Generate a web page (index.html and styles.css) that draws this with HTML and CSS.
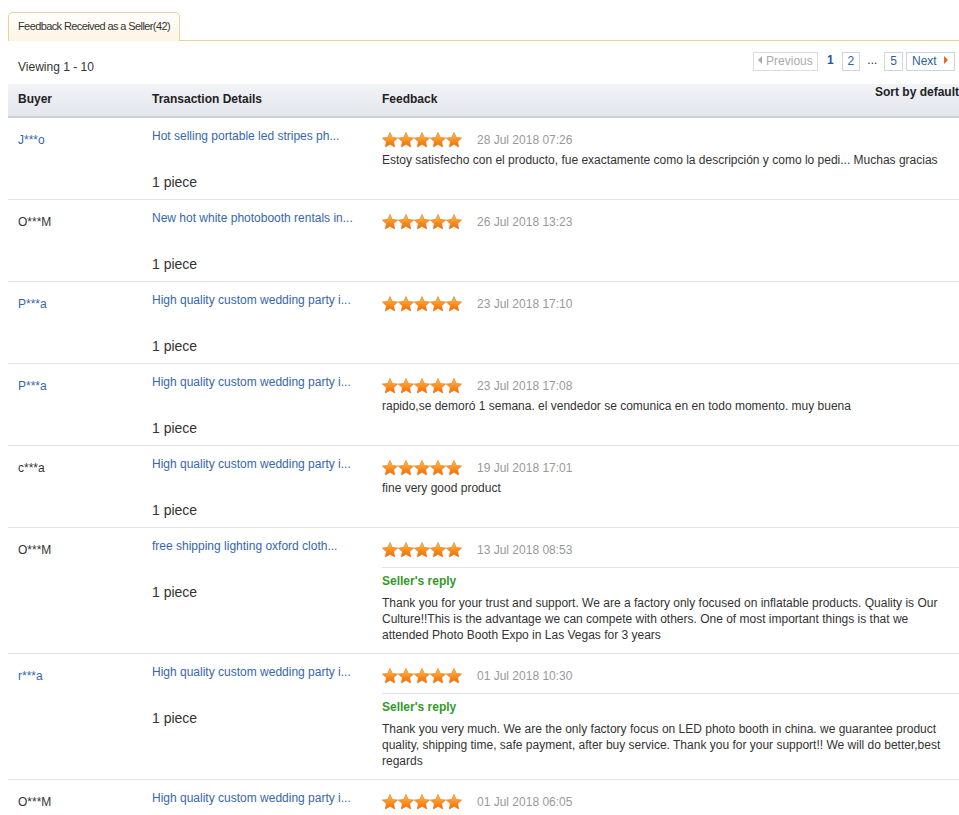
FILE: index.html
```html
<!DOCTYPE html>
<html lang="en">

<head>
    <meta charset="UTF-8">
    <title>Feedback Received as a Seller</title>
    <link rel="stylesheet" href="styles.css">
</head>

<body>
    <!-- shared star shape + fill -->
    <svg class="svg-defs" width="0" height="0">
        <defs>
            <linearGradient id="starFill" x1="0" y1="0" x2="0" y2="1">
                <stop offset="0" stop-color="#ffc650"/>
                <stop offset="0.55" stop-color="#fb8d20"/>
                <stop offset="1" stop-color="#ee6a06"/>
            </linearGradient>
            <symbol id="star" viewBox="0 0 16 16">
                <polygon points="8,0.5 10.2,5.4 15.6,6 11.6,9.7 12.7,15 8,12.3 3.3,15 4.4,9.7 0.4,6 5.8,5.4" fill="url(#starFill)" stroke="#e2700e" stroke-width="0.6" stroke-linejoin="round"/>
            </symbol>
        </defs>
    </svg>

    <div class="tabs">
        <div class="tab">Feedback Received as a Seller(42)</div>
    </div>

    <div class="toolbar">
        <div class="viewing">Viewing 1 - 10</div>
        <div class="pager">
            <a class="prev">Previous</a>
            <span class="current">1</span>
            <a href="#">2</a>
            <span class="dots">...</span>
            <a href="#">5</a>
            <a class="next" href="#">Next</a>
        </div>
    </div>

    <div class="list-head">
        <div class="col">Buyer</div>
        <div class="col">Transaction Details</div>
        <div class="col feedback-head">
            <span>Feedback</span>
            <span class="sort">Sort by default</span>
        </div>
    </div>

    <div class="row">
        <div class="buyer"><a href="#">J***o</a></div>
        <div class="deal">
            <a class="product" href="#">Hot selling portable led stripes ph...</a>
            <div class="qty">1 piece</div>
        </div>
        <div class="feedback">
            <div class="rating">
                <svg class="stars" width="80" height="16"><use href="#star" x="0" width="16" height="16"/><use href="#star" x="16" width="16" height="16"/><use href="#star" x="32" width="16" height="16"/><use href="#star" x="48" width="16" height="16"/><use href="#star" x="64" width="16" height="16"/></svg>
                <span class="date">28 Jul 2018 07:26</span>
            </div>
            <div class="comment">Estoy satisfecho con el producto, fue exactamente como la descripción y como lo pedi... Muchas gracias</div>
        </div>
    </div>

    <div class="row">
        <div class="buyer">O***M</div>
        <div class="deal">
            <a class="product" href="#">New hot white photobooth rentals in...</a>
            <div class="qty">1 piece</div>
        </div>
        <div class="feedback">
            <div class="rating">
                <svg class="stars" width="80" height="16"><use href="#star" x="0" width="16" height="16"/><use href="#star" x="16" width="16" height="16"/><use href="#star" x="32" width="16" height="16"/><use href="#star" x="48" width="16" height="16"/><use href="#star" x="64" width="16" height="16"/></svg>
                <span class="date">26 Jul 2018 13:23</span>
            </div>
        </div>
    </div>

    <div class="row">
        <div class="buyer"><a href="#">P***a</a></div>
        <div class="deal">
            <a class="product" href="#">High quality custom wedding party i...</a>
            <div class="qty">1 piece</div>
        </div>
        <div class="feedback">
            <div class="rating">
                <svg class="stars" width="80" height="16"><use href="#star" x="0" width="16" height="16"/><use href="#star" x="16" width="16" height="16"/><use href="#star" x="32" width="16" height="16"/><use href="#star" x="48" width="16" height="16"/><use href="#star" x="64" width="16" height="16"/></svg>
                <span class="date">23 Jul 2018 17:10</span>
            </div>
        </div>
    </div>

    <div class="row">
        <div class="buyer"><a href="#">P***a</a></div>
        <div class="deal">
            <a class="product" href="#">High quality custom wedding party i...</a>
            <div class="qty">1 piece</div>
        </div>
        <div class="feedback">
            <div class="rating">
                <svg class="stars" width="80" height="16"><use href="#star" x="0" width="16" height="16"/><use href="#star" x="16" width="16" height="16"/><use href="#star" x="32" width="16" height="16"/><use href="#star" x="48" width="16" height="16"/><use href="#star" x="64" width="16" height="16"/></svg>
                <span class="date">23 Jul 2018 17:08</span>
            </div>
            <div class="comment">rapido,se demoró 1 semana. el vendedor se comunica en en todo momento. muy buena</div>
        </div>
    </div>

    <div class="row">
        <div class="buyer">c***a</div>
        <div class="deal">
            <a class="product" href="#">High quality custom wedding party i...</a>
            <div class="qty">1 piece</div>
        </div>
        <div class="feedback">
            <div class="rating">
                <svg class="stars" width="80" height="16"><use href="#star" x="0" width="16" height="16"/><use href="#star" x="16" width="16" height="16"/><use href="#star" x="32" width="16" height="16"/><use href="#star" x="48" width="16" height="16"/><use href="#star" x="64" width="16" height="16"/></svg>
                <span class="date">19 Jul 2018 17:01</span>
            </div>
            <div class="comment">fine very good product</div>
        </div>
    </div>

    <div class="row">
        <div class="buyer">O***M</div>
        <div class="deal">
            <a class="product" href="#">free shipping lighting oxford cloth...</a>
            <div class="qty">1 piece</div>
        </div>
        <div class="feedback">
            <div class="rating">
                <svg class="stars" width="80" height="16"><use href="#star" x="0" width="16" height="16"/><use href="#star" x="16" width="16" height="16"/><use href="#star" x="32" width="16" height="16"/><use href="#star" x="48" width="16" height="16"/><use href="#star" x="64" width="16" height="16"/></svg>
                <span class="date">13 Jul 2018 08:53</span>
            </div>
            <div class="reply">
                <div class="reply-title">Seller's reply</div>
                <div class="reply-text">Thank you for your trust and support. We are a factory only focused on inflatable products. Quality is Our Culture!!This is the advantage we can compete with others. One of most important things is that we<br>attended Photo Booth Expo in Las Vegas for 3 years</div>
            </div>
        </div>
    </div>

    <div class="row">
        <div class="buyer"><a href="#">r***a</a></div>
        <div class="deal">
            <a class="product" href="#">High quality custom wedding party i...</a>
            <div class="qty">1 piece</div>
        </div>
        <div class="feedback">
            <div class="rating">
                <svg class="stars" width="80" height="16"><use href="#star" x="0" width="16" height="16"/><use href="#star" x="16" width="16" height="16"/><use href="#star" x="32" width="16" height="16"/><use href="#star" x="48" width="16" height="16"/><use href="#star" x="64" width="16" height="16"/></svg>
                <span class="date">01 Jul 2018 10:30</span>
            </div>
            <div class="reply">
                <div class="reply-title">Seller's reply</div>
                <div class="reply-text">Thank you very much. We are the only factory focus on LED photo booth in china. we guarantee product quality, shipping time, safe payment, after buy service. Thank you for your support!! We will do better,best regards</div>
            </div>
        </div>
    </div>

    <div class="row">
        <div class="buyer">O***M</div>
        <div class="deal">
            <a class="product" href="#">High quality custom wedding party i...</a>
            <div class="qty">1 piece</div>
        </div>
        <div class="feedback">
            <div class="rating">
                <svg class="stars" width="80" height="16"><use href="#star" x="0" width="16" height="16"/><use href="#star" x="16" width="16" height="16"/><use href="#star" x="32" width="16" height="16"/><use href="#star" x="48" width="16" height="16"/><use href="#star" x="64" width="16" height="16"/></svg>
                <span class="date">01 Jul 2018 06:05</span>
            </div>
        </div>
    </div>
</body>

</html>
```

FILE: styles.css
```css
body {
    margin: 0;
    padding: 12px 0 0 8px;
    font-family: "Liberation Sans", Arial, sans-serif;
    font-size: 12px;
    color: #333;
    background-color: #fff;
    overflow: hidden;
}

a {
    color: #3567ad;
    text-decoration: none;
}

.svg-defs {
    display: block;
    overflow: hidden;
}

/* tab strip */
.tabs {
    display: flex;
    height: 28px;
    border-bottom: 1px solid #e6d399;
}

.tab {
    box-sizing: border-box;
    height: 29px;
    padding: 0 9px;
    line-height: 27px;
    font-size: 11px;
    letter-spacing: -0.6px;
    color: #333;
    border: 1px solid #e6d399;
    border-bottom: none;
    border-radius: 5px 5px 0 0;
    background: linear-gradient(#ffffff, #fdf4e2);
}

/* viewing + pager */
.toolbar {
    display: flex;
    justify-content: space-between;
    align-items: flex-start;
    box-sizing: border-box;
    height: 43px;
    padding: 11px 4px 0 10px;
}

.viewing {
    margin-top: 7px;
    line-height: 16px;
}

.pager {
    display: flex;
    align-items: center;
    gap: 4px;
}

.pager a,
.pager span {
    box-sizing: border-box;
    height: 19px;
    line-height: 17px;
    padding: 0 5px;
}

.pager a {
    border: 1px solid #cdd5df;
    color: #2c5fa3;
}

.pager .prev {
    width: 65px;
    padding: 0;
    text-align: center;
    color: #aaa;
    border-color: #dcdcdc;
    margin-right: 1px;
}

.pager .prev::before {
    content: "";
    display: inline-block;
    margin-right: 4px;
    vertical-align: 1px;
    border-right: 4px solid #aaa;
    border-top: 4px solid transparent;
    border-bottom: 4px solid transparent;
}

.pager .current {
    font-weight: bold;
    color: #1d5797;
    padding: 0 4px;
}

.pager .dots {
    padding: 0 3px;
}

.pager .next {
    width: 49px;
    padding: 0 0 0 5px;
    margin-left: -1px;
}

.pager .next::after {
    content: "";
    display: inline-block;
    margin-left: 7px;
    vertical-align: 1px;
    border-left: 4px solid #e8632b;
    border-top: 4px solid transparent;
    border-bottom: 4px solid transparent;
}

/* table head */
.list-head {
    display: grid;
    grid-template-columns: 134px 230px 1fr;
    height: 32px;
    background: linear-gradient(#f2f3f7, #e3e6ed);
    border-bottom: 2px solid #cdd0d7;
    font-weight: bold;
    color: #222;
}

.list-head .col {
    padding: 7px 0 0 10px;
    line-height: 16px;
}

.feedback-head {
    display: flex;
    justify-content: space-between;
}

.sort {
    margin-top: -6px;
    line-height: 14px;
}

/* feedback rows */
.row {
    display: grid;
    grid-template-columns: 134px 230px 1fr;
    padding: 10px 0 8px;
    border-bottom: 1px solid #e2e2e2;
}

.row > div {
    padding-left: 10px;
}

.buyer {
    padding-top: 4px;
    line-height: 16px;
}

.product {
    display: block;
    line-height: 16px;
}

.qty {
    margin-top: 29px;
    font-size: 14px;
    line-height: 18px;
}

.rating {
    display: flex;
    align-items: center;
    height: 24px;
}

.stars {
    display: block;
}

.date {
    margin-left: 15px;
    color: #999;
}

.comment {
    line-height: 16px;
}

.reply {
    margin-top: 5px;
    padding: 6px 0 2px;
    border-top: 1px solid #e2e2e2;
}

.reply-title {
    line-height: 14px;
    font-weight: bold;
    color: #33992a;
}

.reply-text {
    margin-top: 7px;
    line-height: 16px;
}
```
